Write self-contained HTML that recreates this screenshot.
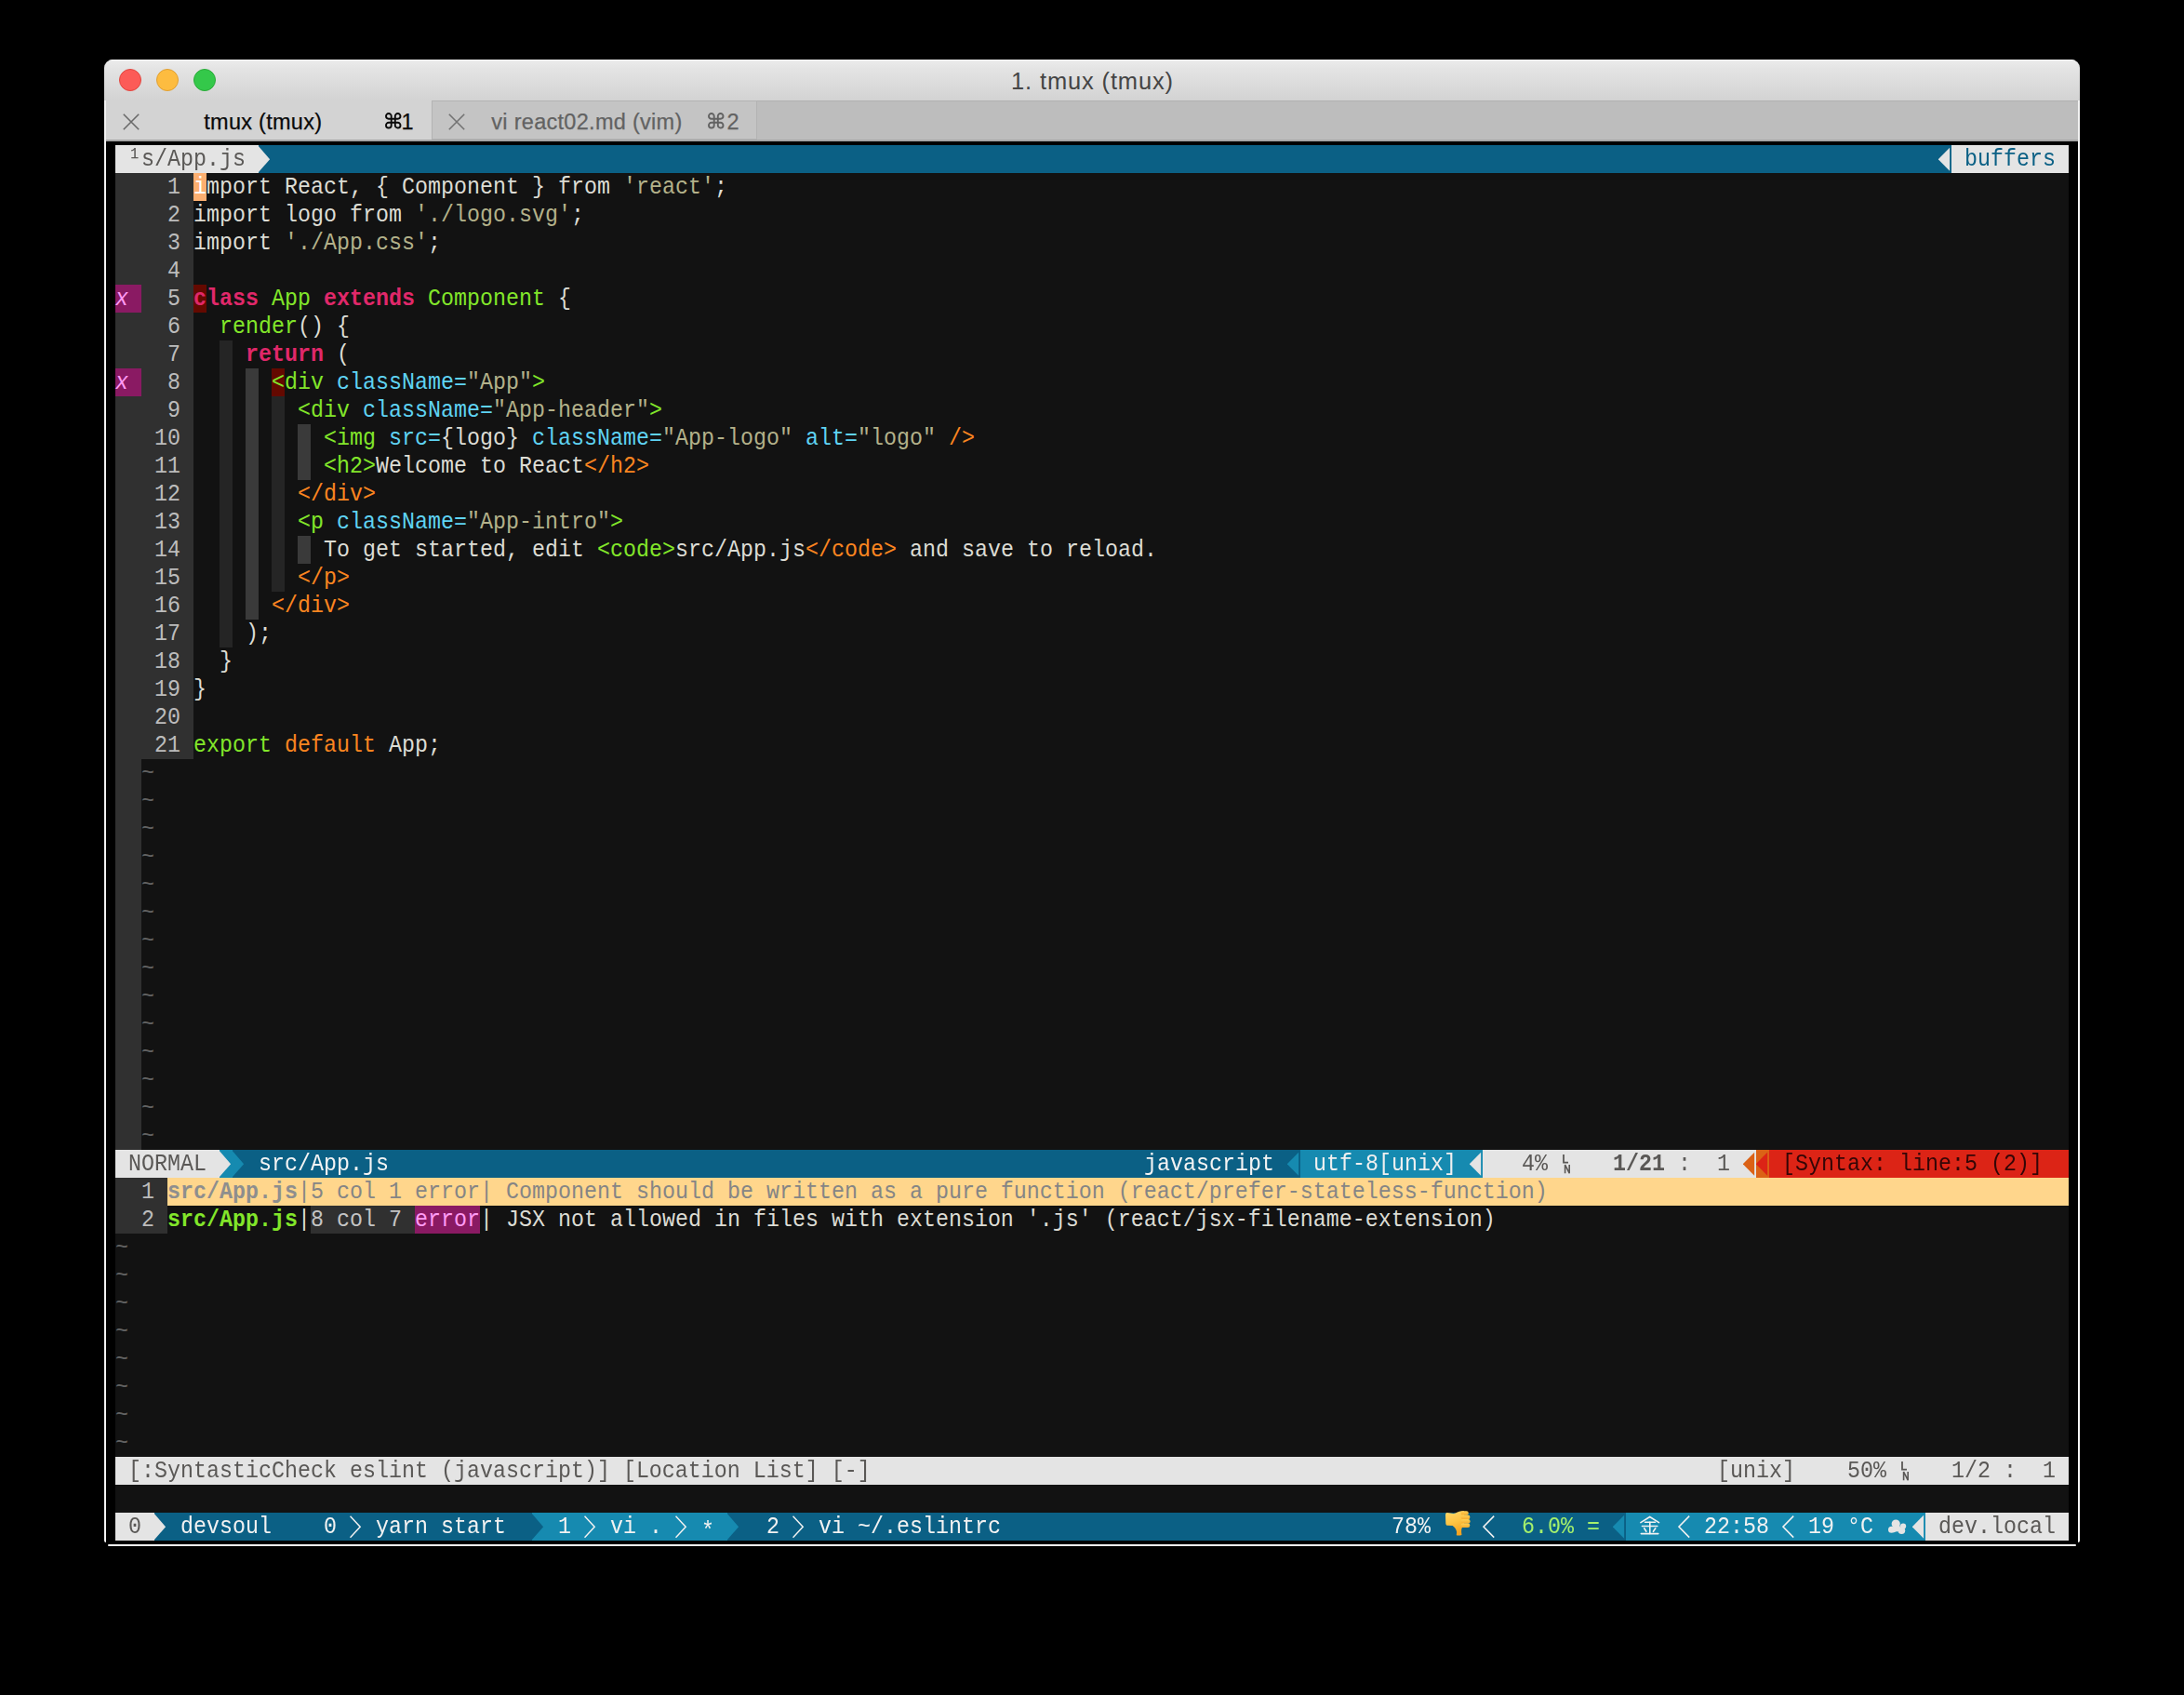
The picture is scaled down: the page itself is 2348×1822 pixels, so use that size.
<!DOCTYPE html>
<html><head><meta charset="utf-8"><title>tmux</title>
<style>
html,body{margin:0;padding:0;background:#000;}
body{width:2348px;height:1822px;position:relative;overflow:hidden;font-family:"Liberation Sans",sans-serif;}
#win{position:absolute;left:112px;top:64px;width:2124px;height:1598px;border-radius:9px 9px 5px 5px;overflow:hidden;background:#000;}
.ln{position:absolute;background:#f3f3f3;}
#tb{position:absolute;left:0;top:0;width:100%;height:44px;background:linear-gradient(#ececec,#e3e3e3 25%,#d3d3d3);box-shadow:inset 0 1px 0 #f6f6f6;}
#tb .l{position:absolute;top:10px;width:24px;height:24px;border-radius:50%;box-sizing:border-box;}
#title{position:absolute;left:0;width:100%;top:8px;text-align:center;font-size:25.5px;letter-spacing:0.85px;line-height:30px;color:#454545;padding-left:1px;box-sizing:border-box;}
#tabs{position:absolute;left:0;top:44px;width:100%;height:44px;background:#bdbdbd;border-top:1px solid #b1b1b1;border-bottom:2px solid #a6a6a6;box-sizing:border-box;}
#tab1{position:absolute;left:0;top:-1px;width:352px;height:42px;background:#d3d3d3;}
#tab2{position:absolute;left:352px;top:-1px;width:350px;height:42px;background:#c4c4c4;border:1px solid #b3b3b3;box-sizing:border-box;}
.tt{position:absolute;font-size:23.5px;line-height:42px;white-space:pre;-webkit-text-stroke:0.25px currentColor;}
#term{position:absolute;left:0;top:88px;width:2124px;height:1510px;background:#000;}
#grid{position:absolute;left:124px;top:156px;width:2100px;height:1500px;background:#121212;}
.b{position:absolute;height:30px;}
.r{position:absolute;left:124px;height:30px;line-height:30px;white-space:pre;font-family:"Liberation Mono",monospace;font-size:26.6602px;transform-origin:0 0;transform:scaleX(0.875);}
.r span{position:absolute;top:0;}
.g{position:absolute;display:block;}
b{font-weight:bold}
</style></head><body>
<div id="win">
<div id="tb"><div class="l" style="left:16px;background:#fc5b57;border:1px solid #e2463f"></div><div class="l" style="left:56px;background:#fdbc40;border:1px solid #e0a033"></div><div class="l" style="left:96px;background:#34c84a;border:1px solid #2aab39"></div>
<div id="title">1. tmux (tmux)</div></div>
<div id="tabs"><div id="tab1"></div><div id="tab2"></div></div>
<div id="term"></div>
</div>
<div class="ln" style="left:112px;top:108px;width:2px;height:1550px;border-radius:0 0 0 2px"></div><div class="ln" style="left:2234px;top:108px;width:2px;height:1550px;border-radius:0 0 2px 0"></div><div class="ln" style="left:116px;top:1660px;width:2116px;height:2px;border-radius:2px"></div>
<div id="grid"></div>
<div class="b" style="left:124px;top:156px;width:154px;background:#e4e4e4"></div><div class="b" style="left:278px;top:156px;width:14px;background:#0b6085"></div><div class="b" style="left:292px;top:156px;width:1792px;background:#0b6085"></div><div class="b" style="left:2084px;top:156px;width:14px;background:#0b6085"></div><div class="b" style="left:2098px;top:156px;width:126px;background:#e4e4e4"></div><div class="b" style="left:124px;top:186px;width:84px;background:#303030"></div><div class="b" style="left:124px;top:216px;width:84px;background:#303030"></div><div class="b" style="left:124px;top:246px;width:84px;background:#303030"></div><div class="b" style="left:124px;top:276px;width:84px;background:#303030"></div><div class="b" style="left:124px;top:306px;width:84px;background:#303030"></div><div class="b" style="left:124px;top:336px;width:84px;background:#303030"></div><div class="b" style="left:124px;top:366px;width:84px;background:#303030"></div><div class="b" style="left:236px;top:366px;width:14px;background:#252525"></div><div class="b" style="left:124px;top:396px;width:84px;background:#303030"></div><div class="b" style="left:236px;top:396px;width:14px;background:#252525"></div><div class="b" style="left:264px;top:396px;width:14px;background:#3a3a3a"></div><div class="b" style="left:124px;top:426px;width:84px;background:#303030"></div><div class="b" style="left:236px;top:426px;width:14px;background:#252525"></div><div class="b" style="left:264px;top:426px;width:14px;background:#3a3a3a"></div><div class="b" style="left:292px;top:426px;width:14px;background:#252525"></div><div class="b" style="left:124px;top:456px;width:84px;background:#303030"></div><div class="b" style="left:236px;top:456px;width:14px;background:#252525"></div><div class="b" style="left:264px;top:456px;width:14px;background:#3a3a3a"></div><div class="b" style="left:292px;top:456px;width:14px;background:#252525"></div><div class="b" style="left:320px;top:456px;width:14px;background:#3a3a3a"></div><div class="b" style="left:124px;top:486px;width:84px;background:#303030"></div><div class="b" style="left:236px;top:486px;width:14px;background:#252525"></div><div class="b" style="left:264px;top:486px;width:14px;background:#3a3a3a"></div><div class="b" style="left:292px;top:486px;width:14px;background:#252525"></div><div class="b" style="left:320px;top:486px;width:14px;background:#3a3a3a"></div><div class="b" style="left:124px;top:516px;width:84px;background:#303030"></div><div class="b" style="left:236px;top:516px;width:14px;background:#252525"></div><div class="b" style="left:264px;top:516px;width:14px;background:#3a3a3a"></div><div class="b" style="left:292px;top:516px;width:14px;background:#252525"></div><div class="b" style="left:124px;top:546px;width:84px;background:#303030"></div><div class="b" style="left:236px;top:546px;width:14px;background:#252525"></div><div class="b" style="left:264px;top:546px;width:14px;background:#3a3a3a"></div><div class="b" style="left:292px;top:546px;width:14px;background:#252525"></div><div class="b" style="left:124px;top:576px;width:84px;background:#303030"></div><div class="b" style="left:236px;top:576px;width:14px;background:#252525"></div><div class="b" style="left:264px;top:576px;width:14px;background:#3a3a3a"></div><div class="b" style="left:292px;top:576px;width:14px;background:#252525"></div><div class="b" style="left:320px;top:576px;width:14px;background:#3a3a3a"></div><div class="b" style="left:124px;top:606px;width:84px;background:#303030"></div><div class="b" style="left:236px;top:606px;width:14px;background:#252525"></div><div class="b" style="left:264px;top:606px;width:14px;background:#3a3a3a"></div><div class="b" style="left:292px;top:606px;width:14px;background:#252525"></div><div class="b" style="left:124px;top:636px;width:84px;background:#303030"></div><div class="b" style="left:236px;top:636px;width:14px;background:#252525"></div><div class="b" style="left:264px;top:636px;width:14px;background:#3a3a3a"></div><div class="b" style="left:124px;top:666px;width:84px;background:#303030"></div><div class="b" style="left:236px;top:666px;width:14px;background:#252525"></div><div class="b" style="left:124px;top:696px;width:84px;background:#303030"></div><div class="b" style="left:124px;top:726px;width:84px;background:#303030"></div><div class="b" style="left:124px;top:756px;width:84px;background:#303030"></div><div class="b" style="left:124px;top:786px;width:84px;background:#303030"></div><div class="b" style="left:124px;top:306px;width:28px;background:#8a1a63"></div><div class="b" style="left:124px;top:396px;width:28px;background:#8a1a63"></div><div class="b" style="left:208px;top:306px;width:14px;background:#640900"></div><div class="b" style="left:292px;top:396px;width:14px;background:#640900"></div><div class="b" style="left:208px;top:186px;width:14px;background:#fdaf70"></div><div class="b" style="left:124px;top:816px;width:28px;background:#303030"></div><div class="b" style="left:124px;top:846px;width:28px;background:#303030"></div><div class="b" style="left:124px;top:876px;width:28px;background:#303030"></div><div class="b" style="left:124px;top:906px;width:28px;background:#303030"></div><div class="b" style="left:124px;top:936px;width:28px;background:#303030"></div><div class="b" style="left:124px;top:966px;width:28px;background:#303030"></div><div class="b" style="left:124px;top:996px;width:28px;background:#303030"></div><div class="b" style="left:124px;top:1026px;width:28px;background:#303030"></div><div class="b" style="left:124px;top:1056px;width:28px;background:#303030"></div><div class="b" style="left:124px;top:1086px;width:28px;background:#303030"></div><div class="b" style="left:124px;top:1116px;width:28px;background:#303030"></div><div class="b" style="left:124px;top:1146px;width:28px;background:#303030"></div><div class="b" style="left:124px;top:1176px;width:28px;background:#303030"></div><div class="b" style="left:124px;top:1206px;width:28px;background:#303030"></div><div class="b" style="left:124px;top:1236px;width:112px;background:#e4e4e4"></div><div class="b" style="left:236px;top:1236px;width:14px;background:#168ab0"></div><div class="b" style="left:250px;top:1236px;width:14px;background:#0b6085"></div><div class="b" style="left:264px;top:1236px;width:1120px;background:#0b6085"></div><div class="b" style="left:1384px;top:1236px;width:14px;background:#0b6085"></div><div class="b" style="left:1398px;top:1236px;width:182px;background:#168ab0"></div><div class="b" style="left:1580px;top:1236px;width:14px;background:#168ab0"></div><div class="b" style="left:1594px;top:1236px;width:280px;background:#e4e4e4"></div><div class="b" style="left:1874px;top:1236px;width:14px;background:#e4e4e4"></div><div class="b" style="left:1888px;top:1236px;width:14px;background:#db6216"></div><div class="b" style="left:1902px;top:1236px;width:322px;background:#dc2416"></div><div class="b" style="left:124px;top:1266px;width:56px;background:#303030"></div><div class="b" style="left:180px;top:1266px;width:2044px;background:#ffd68c"></div><div class="b" style="left:124px;top:1296px;width:56px;background:#303030"></div><div class="b" style="left:334px;top:1296px;width:112px;background:#303030"></div><div class="b" style="left:446px;top:1296px;width:70px;background:#8a1a63"></div><div class="b" style="left:124px;top:1566px;width:2100px;background:#e4e4e4"></div><div class="b" style="left:124px;top:1626px;width:42px;background:#e4e4e4"></div><div class="b" style="left:166px;top:1626px;width:14px;background:#0b6085"></div><div class="b" style="left:180px;top:1626px;width:392px;background:#0b6085"></div><div class="b" style="left:572px;top:1626px;width:14px;background:#168ab0"></div><div class="b" style="left:586px;top:1626px;width:196px;background:#168ab0"></div><div class="b" style="left:782px;top:1626px;width:14px;background:#0b6085"></div><div class="b" style="left:796px;top:1626px;width:938px;background:#0b6085"></div><div class="b" style="left:1734px;top:1626px;width:14px;background:#0b6085"></div><div class="b" style="left:1748px;top:1626px;width:308px;background:#168ab0"></div><div class="b" style="left:2056px;top:1626px;width:14px;background:#168ab0"></div><div class="b" style="left:2070px;top:1626px;width:154px;background:#e4e4e4"></div>
<div class="r" style="top:156px"><span style="left:0px;color:#5a5856"> ¹s/App.js </span><span style="left:2256px;color:#0b6085"> buffers </span></div>
<div class="r" style="top:186px"><span style="left:32px;color:#bcbcbc">  1</span><span style="left:96px;color:#ffffff">i</span><span style="left:112px;color:#dcdcd4">mport React, { Component } from </span><span style="left:624px;color:#b3b18a">&#x27;react&#x27;</span><span style="left:736px;color:#dcdcd4">;</span></div>
<div class="r" style="top:216px"><span style="left:32px;color:#bcbcbc">  2</span><span style="left:96px;color:#dcdcd4">import logo from </span><span style="left:368px;color:#b3b18a">&#x27;./logo.svg&#x27;</span><span style="left:560px;color:#dcdcd4">;</span></div>
<div class="r" style="top:246px"><span style="left:32px;color:#bcbcbc">  3</span><span style="left:96px;color:#dcdcd4">import </span><span style="left:208px;color:#b3b18a">&#x27;./App.css&#x27;</span><span style="left:384px;color:#dcdcd4">;</span></div>
<div class="r" style="top:276px"><span style="left:32px;color:#bcbcbc">  4</span></div>
<div class="r" style="top:306px"><span style="left:32px;color:#bcbcbc">  5</span><span style="left:96px;color:#e0286a;font-weight:bold">class</span><span style="left:176px;color:#dcdcd4"> </span><span style="left:192px;color:#82e62a">App</span><span style="left:240px;color:#dcdcd4"> </span><span style="left:256px;color:#e0286a;font-weight:bold">extends</span><span style="left:368px;color:#dcdcd4"> </span><span style="left:384px;color:#82e62a">Component</span><span style="left:528px;color:#dcdcd4"> {</span><span style="left:0px;color:#ff9bf5;font-style:italic">x</span></div>
<div class="r" style="top:336px"><span style="left:32px;color:#bcbcbc">  6</span><span style="left:96px;color:#dcdcd4">  </span><span style="left:128px;color:#82e62a">render</span><span style="left:224px;color:#dcdcd4">() {</span></div>
<div class="r" style="top:366px"><span style="left:32px;color:#bcbcbc">  7</span><span style="left:96px;color:#dcdcd4">    </span><span style="left:160px;color:#e0286a;font-weight:bold">return</span><span style="left:256px;color:#dcdcd4"> (</span></div>
<div class="r" style="top:396px"><span style="left:32px;color:#bcbcbc">  8</span><span style="left:96px;color:#dcdcd4">      </span><span style="left:192px;color:#82e62a">&lt;div</span><span style="left:256px;color:#dcdcd4"> </span><span style="left:272px;color:#5fd3f3">className=</span><span style="left:432px;color:#b3b18a">&quot;App&quot;</span><span style="left:512px;color:#82e62a">&gt;</span><span style="left:0px;color:#ff9bf5;font-style:italic">x</span></div>
<div class="r" style="top:426px"><span style="left:32px;color:#bcbcbc">  9</span><span style="left:96px;color:#dcdcd4">        </span><span style="left:224px;color:#82e62a">&lt;div</span><span style="left:288px;color:#dcdcd4"> </span><span style="left:304px;color:#5fd3f3">className=</span><span style="left:464px;color:#b3b18a">&quot;App-header&quot;</span><span style="left:656px;color:#82e62a">&gt;</span></div>
<div class="r" style="top:456px"><span style="left:32px;color:#bcbcbc"> 10</span><span style="left:96px;color:#dcdcd4">          </span><span style="left:256px;color:#82e62a">&lt;img</span><span style="left:320px;color:#dcdcd4"> </span><span style="left:336px;color:#5fd3f3">src=</span><span style="left:400px;color:#dcdcd4">{logo}</span><span style="left:496px;color:#dcdcd4"> </span><span style="left:512px;color:#5fd3f3">className=</span><span style="left:672px;color:#b3b18a">&quot;App-logo&quot;</span><span style="left:832px;color:#dcdcd4"> </span><span style="left:848px;color:#5fd3f3">alt=</span><span style="left:912px;color:#b3b18a">&quot;logo&quot;</span><span style="left:1008px;color:#dcdcd4"> </span><span style="left:1024px;color:#fb8520">/&gt;</span></div>
<div class="r" style="top:486px"><span style="left:32px;color:#bcbcbc"> 11</span><span style="left:96px;color:#dcdcd4">          </span><span style="left:256px;color:#82e62a">&lt;h2&gt;</span><span style="left:320px;color:#dcdcd4">Welcome to React</span><span style="left:576px;color:#fb8520">&lt;/h2&gt;</span></div>
<div class="r" style="top:516px"><span style="left:32px;color:#bcbcbc"> 12</span><span style="left:96px;color:#dcdcd4">        </span><span style="left:224px;color:#fb8520">&lt;/div&gt;</span></div>
<div class="r" style="top:546px"><span style="left:32px;color:#bcbcbc"> 13</span><span style="left:96px;color:#dcdcd4">        </span><span style="left:224px;color:#82e62a">&lt;p</span><span style="left:256px;color:#dcdcd4"> </span><span style="left:272px;color:#5fd3f3">className=</span><span style="left:432px;color:#b3b18a">&quot;App-intro&quot;</span><span style="left:608px;color:#82e62a">&gt;</span></div>
<div class="r" style="top:576px"><span style="left:32px;color:#bcbcbc"> 14</span><span style="left:96px;color:#dcdcd4">          To get started, edit </span><span style="left:592px;color:#82e62a">&lt;code&gt;</span><span style="left:688px;color:#dcdcd4">src/App.js</span><span style="left:848px;color:#fb8520">&lt;/code&gt;</span><span style="left:960px;color:#dcdcd4"> and save to reload.</span></div>
<div class="r" style="top:606px"><span style="left:32px;color:#bcbcbc"> 15</span><span style="left:96px;color:#dcdcd4">        </span><span style="left:224px;color:#fb8520">&lt;/p&gt;</span></div>
<div class="r" style="top:636px"><span style="left:32px;color:#bcbcbc"> 16</span><span style="left:96px;color:#dcdcd4">      </span><span style="left:192px;color:#fb8520">&lt;/div&gt;</span></div>
<div class="r" style="top:666px"><span style="left:32px;color:#bcbcbc"> 17</span><span style="left:96px;color:#dcdcd4">    );</span></div>
<div class="r" style="top:696px"><span style="left:32px;color:#bcbcbc"> 18</span><span style="left:96px;color:#dcdcd4">  }</span></div>
<div class="r" style="top:726px"><span style="left:32px;color:#bcbcbc"> 19</span><span style="left:96px;color:#dcdcd4">}</span></div>
<div class="r" style="top:756px"><span style="left:32px;color:#bcbcbc"> 20</span></div>
<div class="r" style="top:786px"><span style="left:32px;color:#bcbcbc"> 21</span><span style="left:96px;color:#82e62a">export</span><span style="left:192px;color:#dcdcd4"> </span><span style="left:208px;color:#fb8520">default</span><span style="left:320px;color:#dcdcd4"> App;</span></div>
<div class="r" style="top:816px"><span style="left:32px;color:#626262">~</span></div>
<div class="r" style="top:846px"><span style="left:32px;color:#626262">~</span></div>
<div class="r" style="top:876px"><span style="left:32px;color:#626262">~</span></div>
<div class="r" style="top:906px"><span style="left:32px;color:#626262">~</span></div>
<div class="r" style="top:936px"><span style="left:32px;color:#626262">~</span></div>
<div class="r" style="top:966px"><span style="left:32px;color:#626262">~</span></div>
<div class="r" style="top:996px"><span style="left:32px;color:#626262">~</span></div>
<div class="r" style="top:1026px"><span style="left:32px;color:#626262">~</span></div>
<div class="r" style="top:1056px"><span style="left:32px;color:#626262">~</span></div>
<div class="r" style="top:1086px"><span style="left:32px;color:#626262">~</span></div>
<div class="r" style="top:1116px"><span style="left:32px;color:#626262">~</span></div>
<div class="r" style="top:1146px"><span style="left:32px;color:#626262">~</span></div>
<div class="r" style="top:1176px"><span style="left:32px;color:#626262">~</span></div>
<div class="r" style="top:1206px"><span style="left:32px;color:#626262">~</span></div>
<div class="r" style="top:1236px"><span style="left:0px;color:#5a5856"> NORMAL </span><span style="left:176px;color:#f4f4f4">src/App.js</span><span style="left:1264px;color:#f4f4f4">javascript</span><span style="left:1456px;color:#f0f0f0"> utf-8[unix] </span><span style="left:1728px;color:#5a5856">4%</span><span style="left:1840px;color:#5a5856;font-weight:bold">1/21</span><span style="left:1920px;color:#5a5856">:</span><span style="left:1968px;color:#5a5856">1</span><span style="left:2048px;color:#340606">[Syntax: line:5 (2)]</span></div>
<div class="r" style="top:1266px"><span style="left:32px;color:#bcbcbc">1</span><span style="left:64px;color:#8e8e8e;font-weight:bold">src/App.js</span><span style="left:224px;color:#858585">|</span><span style="left:240px;color:#858585">5 col 1 error</span><span style="left:448px;color:#858585">| Component should be written as a pure function (react/prefer-stateless-function)</span></div>
<div class="r" style="top:1296px"><span style="left:32px;color:#bcbcbc">2</span><span style="left:64px;color:#82e62a;font-weight:bold">src/App.js</span><span style="left:224px;color:#dcdcd4">|</span><span style="left:240px;color:#c4c4c4">8 col 7 </span><span style="left:368px;color:#ff9bf5">error</span><span style="left:448px;color:#dcdcd4">| JSX not allowed in files with extension &#x27;.js&#x27; (react/jsx-filename-extension)</span></div>
<div class="r" style="top:1326px"><span style="left:0px;color:#626262">~</span></div>
<div class="r" style="top:1356px"><span style="left:0px;color:#626262">~</span></div>
<div class="r" style="top:1386px"><span style="left:0px;color:#626262">~</span></div>
<div class="r" style="top:1416px"><span style="left:0px;color:#626262">~</span></div>
<div class="r" style="top:1446px"><span style="left:0px;color:#626262">~</span></div>
<div class="r" style="top:1476px"><span style="left:0px;color:#626262">~</span></div>
<div class="r" style="top:1506px"><span style="left:0px;color:#626262">~</span></div>
<div class="r" style="top:1536px"><span style="left:0px;color:#626262">~</span></div>
<div class="r" style="top:1566px"><span style="left:16px;color:#5a5856">[:SyntasticCheck eslint (javascript)] [Location List] [-]</span><span style="left:1968px;color:#5a5856">[unix]</span><span style="left:2128px;color:#5a5856">50%</span><span style="left:2256px;color:#5a5856">1/2</span><span style="left:2320px;color:#5a5856">:</span><span style="left:2368px;color:#5a5856">1</span></div>
<div class="r" style="top:1626px"><span style="left:0px;color:#5a5856"> 0 </span><span style="left:80px;color:#f2f2f2">devsoul</span><span style="left:256px;color:#f2f2f2">0</span><span style="left:320px;color:#f2f2f2">yarn start</span><span style="left:544px;color:#f2f2f2">1</span><span style="left:608px;color:#f2f2f2">vi .</span><span style="left:720px;color:#f2f2f2;top:5px">*</span><span style="left:800px;color:#f2f2f2">2</span><span style="left:864px;color:#f2f2f2">vi ~/.eslintrc</span><span style="left:1568px;color:#f2f2f2">78%</span><span style="left:1728px;color:#a5f06c">6.0%</span><span style="left:1808px;color:#a5f06c">=</span><span style="left:1952px;color:#f2f2f2">22:58</span><span style="left:2080px;color:#f2f2f2">19</span><span style="left:2128px;color:#f2f2f2">°C</span><span style="left:2224px;color:#5a5856"> dev.local </span></div>
<svg class="g" style="left:278px;top:156px" width="14" height="30" viewBox="0 0 14 30"><path d="M0 1.2 L12.1 15.2 L0 29.1Z" fill="#e4e4e4"/></svg><svg class="g" style="left:2084px;top:156px" width="14" height="30" viewBox="0 0 14 30"><path d="M12.1 2.7 L-0.3 15.2 L12.1 27.7Z" fill="#e4e4e4"/></svg><svg class="g" style="left:236px;top:1236px" width="14" height="30" viewBox="0 0 14 30"><path d="M0 1.2 L12.1 15.2 L0 29.1Z" fill="#e4e4e4"/></svg><svg class="g" style="left:250px;top:1236px" width="14" height="30" viewBox="0 0 14 30"><path d="M0 1.2 L12.1 15.2 L0 29.1Z" fill="#168ab0"/></svg><svg class="g" style="left:1384px;top:1236px" width="14" height="30" viewBox="0 0 14 30"><path d="M12.1 2.7 L-0.3 15.2 L12.1 27.7Z" fill="#168ab0"/></svg><svg class="g" style="left:1580px;top:1236px" width="14" height="30" viewBox="0 0 14 30"><path d="M12.1 2.7 L-0.3 15.2 L12.1 27.7Z" fill="#e4e4e4"/></svg><svg class="g" style="left:1678px;top:1236px" width="14" height="30" viewBox="0 0 14 30"><g fill="none" stroke="#5a5856" stroke-width="1.8"><path d="M3 5 V13.7 H8"/><path d="M4.6 25.2 V16 L9.2 25.2 V16" stroke-width="1.6"/></g></svg><svg class="g" style="left:1874px;top:1236px" width="14" height="30" viewBox="0 0 14 30"><path d="M12.1 2.7 L-0.3 15.2 L12.1 27.7Z" fill="#db6216"/></svg><svg class="g" style="left:1888px;top:1236px" width="14" height="30" viewBox="0 0 14 30"><path d="M12.1 2.7 L-0.3 15.2 L12.1 27.7Z" fill="#dc2416"/></svg><svg class="g" style="left:2042px;top:1566px" width="14" height="30" viewBox="0 0 14 30"><g fill="none" stroke="#5a5856" stroke-width="1.8"><path d="M3 5 V13.7 H8"/><path d="M4.6 25.2 V16 L9.2 25.2 V16" stroke-width="1.6"/></g></svg><svg class="g" style="left:166px;top:1626px" width="14" height="30" viewBox="0 0 14 30"><path d="M0 1.2 L12.1 15.2 L0 29.1Z" fill="#e4e4e4"/></svg><svg class="g" style="left:376px;top:1626px" width="14" height="30" viewBox="0 0 14 30"><path d="M0.5 3.7 L11.2 15.3 L0.5 26.7" fill="none" stroke="#f2f2f2" stroke-width="1.5"/></svg><svg class="g" style="left:572px;top:1626px" width="14" height="30" viewBox="0 0 14 30"><path d="M0 1.2 L12.1 15.2 L0 29.1Z" fill="#0b6085"/></svg><svg class="g" style="left:628px;top:1626px" width="14" height="30" viewBox="0 0 14 30"><path d="M0.5 3.7 L11.2 15.3 L0.5 26.7" fill="none" stroke="#f2f2f2" stroke-width="1.5"/></svg><svg class="g" style="left:726px;top:1626px" width="14" height="30" viewBox="0 0 14 30"><path d="M0.5 3.7 L11.2 15.3 L0.5 26.7" fill="none" stroke="#f2f2f2" stroke-width="1.5"/></svg><svg class="g" style="left:782px;top:1626px" width="14" height="30" viewBox="0 0 14 30"><path d="M0 1.2 L12.1 15.2 L0 29.1Z" fill="#168ab0"/></svg><svg class="g" style="left:852px;top:1626px" width="14" height="30" viewBox="0 0 14 30"><path d="M0.5 3.7 L11.2 15.3 L0.5 26.7" fill="none" stroke="#f2f2f2" stroke-width="1.5"/></svg><svg class="g" style="left:1594px;top:1626px" width="14" height="30" viewBox="0 0 14 30"><path d="M12.2 3.6 L0.9 15.1 L12.2 26.6" fill="none" stroke="#f2f2f2" stroke-width="1.5"/></svg><svg class="g" style="left:1734px;top:1626px" width="14" height="30" viewBox="0 0 14 30"><path d="M12.1 2.7 L-0.3 15.2 L12.1 27.7Z" fill="#168ab0"/></svg><svg class="g" style="left:1804px;top:1626px" width="14" height="30" viewBox="0 0 14 30"><path d="M12.2 3.6 L0.9 15.1 L12.2 26.6" fill="none" stroke="#f2f2f2" stroke-width="1.5"/></svg><svg class="g" style="left:1916px;top:1626px" width="14" height="30" viewBox="0 0 14 30"><path d="M12.2 3.6 L0.9 15.1 L12.2 26.6" fill="none" stroke="#f2f2f2" stroke-width="1.5"/></svg><svg class="g" style="left:2056px;top:1626px" width="14" height="30" viewBox="0 0 14 30"><path d="M12.1 2.7 L-0.3 15.2 L12.1 27.7Z" fill="#e4e4e4"/></svg><svg class="g" style="left:1553.6px;top:1623.5px" width="27" height="27" viewBox="0 0 27 27">
<defs><linearGradient id="tg" x1="0" y1="0" x2="0.25" y2="1"><stop offset="0" stop-color="#ffd86c"/><stop offset="0.5" stop-color="#fdc646"/><stop offset="1" stop-color="#f4a422"/></linearGradient>
<linearGradient id="tf" x1="0" y1="0" x2="0" y2="1"><stop offset="0" stop-color="#ffd257"/><stop offset="1" stop-color="#f6ab2c"/></linearGradient></defs>
<path d="M1.6 2.1 C0.4 2.3 0 3.4 0 5 L0.3 13.5 C0.4 15.2 1.2 15.8 2.4 15.8 L7.6 16.1 C9.8 17.6 11.6 19.8 12 22.3 C12.2 24 11.9 25 11.8 25.8 C11.9 26.5 12.6 26.6 14.5 26.6 C16.6 26.6 17.4 26.4 17.5 25.6 C17.1 23.4 17 21 17.4 19.2 C17.6 18.4 18 17.8 18.6 17.7 L20 17.7 L20 0.3 L17 0.3 C14 0.5 11.5 2.6 9 3.1 C6.5 3.3 4 2 1.6 2.1Z" fill="url(#tg)"/>
<rect x="16.6" y="0.2" width="8.2" height="4.6" rx="2.2" fill="url(#tf)"/>
<rect x="16.6" y="4.5" width="9.8" height="4.9" rx="2.3" fill="url(#tf)"/>
<rect x="16.6" y="9.0" width="10" height="4.8" rx="2.3" fill="url(#tf)"/>
<rect x="16.6" y="13.4" width="9.7" height="4.5" rx="2.2" fill="url(#tf)"/>
</svg><svg class="g" style="left:1762px;top:1626px" width="28" height="30" viewBox="0 0 28 30"><g fill="none" stroke="#f2f2f2" stroke-width="1.6" stroke-linecap="round">
<path d="M1.9 10.6 L11.7 4.5 L21.5 10.6"/><path d="M6.5 10.2 H17.5"/><path d="M3.4 14.5 H19.8"/><path d="M11.8 10.2 V22.4"/><path d="M5.7 16.8 L7.9 20.3 M17.8 16.8 L15.4 20.3"/><path d="M2.3 22.6 H20.8"/></g></svg><svg class="g" style="left:2028px;top:1626px" width="28" height="30" viewBox="0 0 28 30"><g fill="#e4e4e4">
<circle cx="5.5" cy="18.2" r="3.5"/><circle cx="10.2" cy="12" r="4.6"/><circle cx="18.1" cy="14.5" r="3.1"/><circle cx="16.4" cy="19.3" r="3.8"/><circle cx="11.3" cy="16.6" r="3.8"/><circle cx="8" cy="18.5" r="2.8"/></g></svg><svg class="g" style="left:130.5px;top:120.5px" width="20" height="20" viewBox="0 0 20 20"><path d="M1.8 1.8 L18.2 18.2 M18.2 1.8 L1.8 18.2" stroke="#6a6a6a" stroke-width="1.6" fill="none"/></svg><div class="tt" style="left:219.3px;top:109.6px;color:#0a0a0a;letter-spacing:0.27px">tmux (tmux)</div><svg class="g" style="left:414.2px;top:121.1px" width="17.5" height="17.5" viewBox="0 0 17.5 17.5"><path d="M6.7 3.85 A2.85 2.85 0 1 0 3.85 6.7 H13.65 A2.85 2.85 0 1 0 10.8 3.85 V13.65 A2.85 2.85 0 1 0 13.65 10.8 H3.85 A2.85 2.85 0 1 0 6.7 13.65 Z" fill="none" stroke="#0a0a0a" stroke-width="1.9"/></svg><div class="tt" style="left:431.5px;top:109.6px;color:#0a0a0a">1</div><svg class="g" style="left:480.5px;top:120.5px" width="20" height="20" viewBox="0 0 20 20"><path d="M1.8 1.8 L18.2 18.2 M18.2 1.8 L1.8 18.2" stroke="#737373" stroke-width="1.6" fill="none"/></svg><div class="tt" style="left:528.3px;top:109.6px;color:#626262;letter-spacing:0.29px">vi react02.md (vim)</div><svg class="g" style="left:761.1px;top:121.1px" width="17.5" height="17.5" viewBox="0 0 17.5 17.5"><path d="M6.7 3.85 A2.85 2.85 0 1 0 3.85 6.7 H13.65 A2.85 2.85 0 1 0 10.8 3.85 V13.65 A2.85 2.85 0 1 0 13.65 10.8 H3.85 A2.85 2.85 0 1 0 6.7 13.65 Z" fill="none" stroke="#626262" stroke-width="1.9"/></svg><div class="tt" style="left:781.4px;top:109.6px;color:#626262">2</div></body></html>
